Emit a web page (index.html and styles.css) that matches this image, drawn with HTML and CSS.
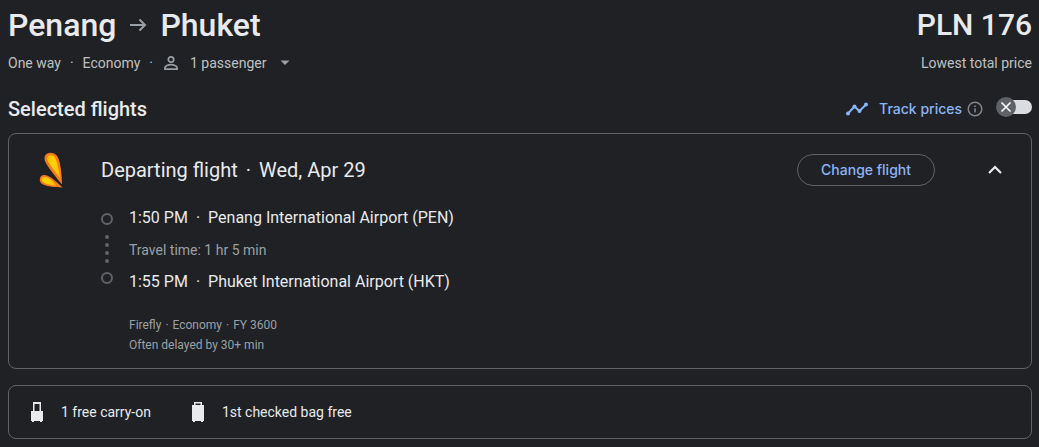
FILE: index.html
```html
<!DOCTYPE html>
<html lang="en">
<head>
  <meta charset="UTF-8">
  <title>Penang to Phuket</title>
  <link rel="stylesheet" href="styles.css">
</head>
<body>
  <header class="trip">
    <div>
      <h1 class="route">
        Penang
        <svg class="arrow" width="20" height="16" viewBox="0 0 20 16"><path d="M2 8h15M11.500 2.500 17 8l-5.500 5.500" fill="none" stroke="currentColor" stroke-width="2"/></svg>
        Phuket
      </h1>
      <div class="trip-info">
        <span>One way</span>
        <span>·</span>
        <span>Economy</span>
        <span>·</span>
        <button class="passengers">
          <svg width="18" height="18" viewBox="0 0 18 18" fill="none" stroke="currentColor" stroke-width="1.700"><circle cx="9" cy="5.500" r="2.700"/><path d="M2.900 15.100v-1.300c0-1.900 3.800-3.100 6.100-3.100s6.100 1.200 6.100 3.100v1.300z"/></svg>
          <span>1 passenger</span>
          <svg class="caret" width="10" height="6" viewBox="0 0 10 6"><path d="M.5 .5h9l-4.500 4.500z" fill="currentColor"/></svg>
        </button>
      </div>
    </div>
    <div class="price">
      <div class="amount">PLN 176</div>
      <div class="note">Lowest total price</div>
    </div>
  </header>

  <div class="section-head">
    <h2>Selected flights</h2>
    <div class="track">
      <svg width="24" height="16" viewBox="0 0 24 16"><path d="M3 12.500 9.500 5.500l5 4.500 6.500-6.500" fill="none" stroke="currentColor" stroke-width="2"/><g fill="currentColor"><circle cx="3" cy="12.500" r="2"/><circle cx="9.500" cy="5.500" r="2"/><circle cx="14.500" cy="10" r="2"/><circle cx="21" cy="3.500" r="2"/></g></svg>
      <label for="track">Track prices</label>
      <button class="info" aria-label="About price tracking">
        <svg width="16" height="16" viewBox="0 0 16 16"><circle cx="8" cy="8" r="6.800" fill="none" stroke="currentColor" stroke-width="1.500"/><path d="M7.200 7.200h1.600v4.400H7.200zM7.200 4.400h1.600V6H7.200z" fill="currentColor"/></svg>
      </button>
      <span class="switch">
        <input type="checkbox" id="track">
        <svg class="thumb" width="20" height="20" viewBox="0 0 20 20"><circle cx="10" cy="10" r="10" fill="#5f6368"/><path d="M5.500 5.500l9 9M14.500 5.500l-9 9" stroke="#fff" stroke-width="1.600"/></svg>
      </span>
    </div>
  </div>

  <section class="card flight">
    <div class="flight-head">
      <svg class="logo" width="26" height="36" viewBox="0 0 26 36">
        <defs>
          <linearGradient id="flame" x1="0" y1="0" x2="1" y2="1"><stop offset="0" stop-color="#ffb70a"/><stop offset="0.400" stop-color="#ffd500"/><stop offset="1" stop-color="#fdb10d"/></linearGradient>
        </defs>
        <path d="M24 32.500C19.500 27 11 17 7.400 10C5 4.500 8 .8 12.500.8c5.500 0 8 4.200 9.300 10.200 1.500 7 2.300 16 2.200 21.500z" fill="#f47b20"/>
        <path d="M22.500 27C18 20.500 12 13.500 9.800 9 8.200 5.500 9.800 3.200 12.800 3.200c3.500 0 5.200 3.500 6.400 8.300 1.300 5.500 2.600 10.500 3.300 15.500z" fill="url(#flame)"/>
        <path d="M24.500 35.500c-7.500-.2-15-.7-20-3.200C1.500 30.500 1 26.500 3 24.300c2.500-2.500 6.300-1.300 9.500.9 4.500 3 8.700 7 12 10.300z" fill="#f47b20"/>
        <path d="M18.500 33.500c-5-.4-9.200-1-12.500-2.800-2.500-1.500-2.800-3.700-1.500-5 1.700-1.700 4-.7 6.500.9 3 2 5.100 4.600 7.500 6.900z" fill="url(#flame)"/>
      </svg>
      <h3>Departing flight<span class="sep">·</span>Wed, Apr 29</h3>
      <button class="change">Change flight</button>
      <button class="collapse" aria-label="Hide details">
        <svg width="14" height="10" viewBox="0 0 14 10"><path d="M1 8l6-6 6 6" fill="none" stroke="currentColor" stroke-width="2.200"/></svg>
      </button>
    </div>
    <div class="legs">
      <svg class="line" width="12" height="72" viewBox="0 0 12 72">
        <g fill="none" stroke="#5f6368" stroke-width="2"><circle cx="6" cy="6" r="5"/><circle cx="6" cy="65" r="5"/></g>
        <g fill="#5f6368"><circle cx="6" cy="24" r="2"/><circle cx="6" cy="32" r="2"/><circle cx="6" cy="40" r="2"/><circle cx="6" cy="48" r="2"/></g>
      </svg>
      <div>
        <div class="stop">1:50 PM<span class="sep">·</span>Penang International Airport (PEN)</div>
        <div class="travel-time">Travel time: 1 hr 5 min</div>
        <div class="stop">1:55 PM<span class="sep">·</span>Phuket International Airport (HKT)</div>
        <div class="details">
          <div>Firefly<span class="dot">·</span>Economy<span class="dot">·</span>FY 3600</div>
          <div>Often delayed by 30+ min</div>
        </div>
      </div>
    </div>
  </section>

  <section class="card bags">
    <div class="bag">
      <svg width="14" height="20" viewBox="0 0 14 20" fill="currentColor"><path d="M3 0h8v9h2v10h-1v1h-2v-1H4v1H2v-1H1V9h2zM4.500 2v7h5V2z" fill-rule="evenodd"/></svg>
      <span>1 free carry-on</span>
    </div>
    <div class="bag">
      <svg width="14" height="20" viewBox="0 0 14 20" fill="currentColor"><path d="M3 0h8v3h2v16h-1v1h-2v-1H4v1H2v-1H1V3h2zM4.500 1.500V3h5V1.500z" fill-rule="evenodd"/></svg>
      <span>1st checked bag free</span>
    </div>
  </section>
</body>
</html>
```

FILE: styles.css
```css
body {
  margin: 0;
  padding: 5px 7px 8px 8px;
  font-family: Roboto, "Liberation Sans", sans-serif;
  font-size: 14px;
  line-height: 20px;
  background: #202124;
  color: #e8eaed;
}
h1, h2, h3 {
  margin: 0;
  font-weight: 400;
}
button {
  padding: 0;
  border: none;
  background: none;
  color: inherit;
  font: inherit;
  cursor: pointer;
}
svg {
  display: block;
  flex: none;
}
.trip {
  display: flex;
  justify-content: space-between;
}
.route {
  display: flex;
  align-items: center;
  gap: 12px;
  font-size: 32px;
  font-weight: 500;
  line-height: 40px;
}
.arrow {
  color: #9aa0a6;
}
.trip-info {
  display: flex;
  gap: 9px;
  margin-top: 8px;
  color: #bdc1c6;
}
.passengers {
  display: flex;
  align-items: center;
  gap: 10px;
}
.passengers svg {
  color: #9aa0a6;
}
.passengers .caret {
  margin-left: 4px;
}
.price {
  text-align: right;
}
.amount {
  font-size: 30px;
  font-weight: 500;
  line-height: 40px;
}
.note {
  margin-top: 8px;
  color: #bdc1c6;
}
.section-head {
  display: flex;
  justify-content: space-between;
  align-items: center;
  margin: 24px 0 12px;
}
.section-head h2 {
  font-size: 20px;
  font-weight: 500;
  line-height: 24px;
}
.track {
  display: flex;
  align-items: center;
  color: #8ab4f8;
}
.track label {
  margin: 0 5px 0 10px;
  font-family: Inter, Roboto, sans-serif;
  font-weight: 500;
}
.info {
  color: #80868b;
}
.switch {
  position: relative;
  margin: 0 0 4px 17px;
  height: 14px;
}
.switch input {
  appearance: none;
  display: block;
  width: 32px;
  height: 14px;
  margin: 0;
  border-radius: 7px;
  background: #dadce0;
}
.thumb {
  position: absolute;
  left: -4px;
  top: -3px;
  pointer-events: none;
}
.card {
  border: 1px solid #5f6368;
  border-radius: 8px;
}
.flight {
  padding: 18px 29px 13px;
}
.flight-head {
  display: flex;
  align-items: center;
}
.flight-head h3 {
  flex: 1;
  margin-left: 37px;
  font-size: 20px;
  line-height: 24px;
}
.change {
  height: 32px;
  padding: 0 23px;
  border: 1px solid #5f6368;
  border-radius: 16px;
  color: #8ab4f8;
  font-family: Inter, Roboto, sans-serif;
  font-weight: 500;
}
.collapse {
  margin-left: 53px;
}
.legs {
  display: flex;
  gap: 16px;
  margin: 18px 0 0 63px;
}
.line {
  margin-top: 7px;
}
.stop {
  font-size: 16px;
  line-height: 24px;
}
.sep {
  margin: 0 8px;
}
.travel-time {
  margin: 10px 0;
  color: #9aa0a6;
}
.details {
  margin-top: 21px;
  font-size: 12px;
  color: #9aa0a6;
}
.dot {
  margin: 0 4px;
}
.bags {
  display: flex;
  gap: 40px;
  margin-top: 16px;
  padding: 16px 21px;
}
.bag {
  display: flex;
  align-items: center;
  gap: 17px;
}
```
